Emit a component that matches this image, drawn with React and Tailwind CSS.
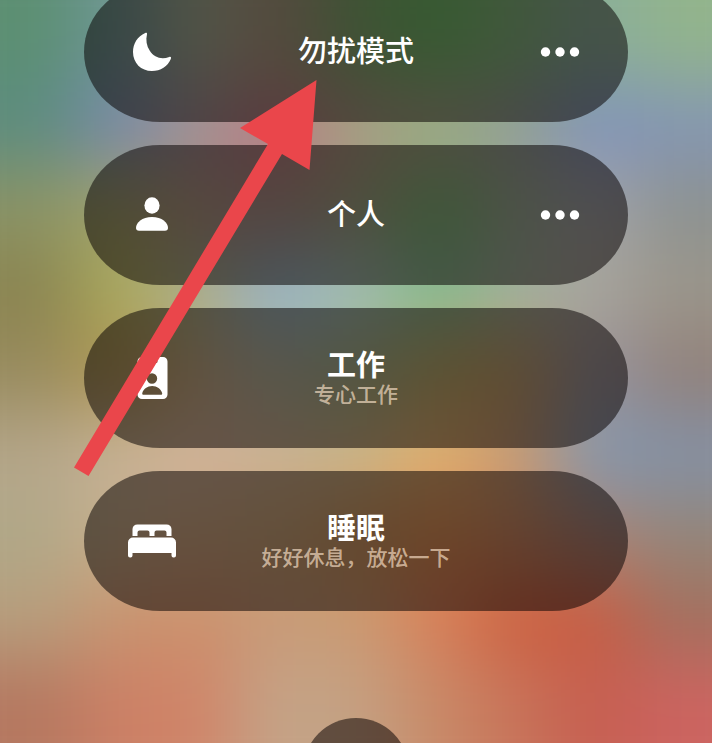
import { clsx } from 'clsx';

// Wallpaper tones, left to right and top to bottom
const WALLPAPER = [
  ['#5c8f72', '#6e9696', '#a5b295', '#ac9a82', '#7cac6e', '#6cbe68', '#82b87c', '#8aae9c', '#92b48c'],
  ['#5c8c80', '#7888ae', '#a08d92', '#bc7884', '#a99a84', '#a3a387', '#949c96', '#8092bc', '#8496b4'],
  ['#8c9466', '#a2a46c', '#b09484', '#aa8e84', '#a0a482', '#78b772', '#9aac92', '#a4a6ac', '#8d9290'],
  ['#8a8450', '#acab5c', '#a8af8a', '#92b4cc', '#a2beb6', '#82ba90', '#9fb0a0', '#a9a59c', '#9b968b'],
  ['#988b5e', '#b09650', '#c8ac86', '#b2b6a0', '#a4b488', '#bcac68', '#c4a066', '#9894a0', '#92817a'],
  ['#b5a68a', '#c6b297', '#d0b29a', '#cbb092', '#cbb489', '#e2b070', '#c89a74', '#8498ae', '#8491a6'],
  ['#b0a888', '#c8b08c', '#ceaa84', '#c8a87a', '#cc9a62', '#e09052', '#ce8c62', '#ac8678', '#948679'],
  ['#b79e7d', '#c89470', '#cc906c', '#c89a78', '#ca9a72', '#d8805a', '#cc6040', '#c85c42', '#a3705e'],
  ['#b57860', '#cc8066', '#d08468', '#c4a488', '#c4a183', '#c88a68', '#c8745a', '#c65e50', '#cc6460'],
];

// The outer ring repeats the edge tones so the blur never runs out of colour
const pad = (list) => [list[0], ...list, list[list.length - 1]];
const TILES = pad(WALLPAPER.map(pad)).flat();

const MoonIcon = () => (
  <svg viewBox="0 0 48 48" className="size-12" fill="currentColor" aria-hidden="true">
    <path d="M19 6.2C19.4 4.9 18.4 4.4 17.2 5C9.6 8.4 5 15.5 5 24C5 35 13 43 24 43C32.4 43 39.9 38.3 42.8 31C43.5 29.2 42.7 28.3 41.2 28.9C33.5 32 26 29.3 21.8 22.8C18.5 17.6 17.6 12 19 6.2Z" />
  </svg>
);

const PersonIcon = () => (
  <svg viewBox="0 0 48 48" className="size-12" fill="currentColor" aria-hidden="true">
    <ellipse cx="24" cy="14.5" rx="7.6" ry="8.2" />
    <path d="M11 39.7C9 39.7 8 38.7 8 37.1C8 31.5 14 25.9 24 25.9S40 31.5 40 37.1C40 38.7 39 39.7 37 39.7Z" />
  </svg>
);

const BadgeIcon = () => (
  <svg viewBox="0 0 48 48" className="size-12" fill="currentColor" aria-hidden="true">
    <path
      fillRule="evenodd"
      d="M14 3H35A4.5 4.5 0 0 1 39.5 7.5V40.5A4.5 4.5 0 0 1 35 45H14A4.5 4.5 0 0 1 9.5 40.5V7.5A4.5 4.5 0 0 1 14 3ZM20.5 6A1.5 1.5 0 0 0 20.5 9H28A1.5 1.5 0 0 0 28 6ZM24 19.3A5.2 5.2 0 0 0 24 29.7A5.2 5.2 0 0 0 24 19.3ZM15.5 40.8H33C34 40.8 34.4 40 34.1 39C33 35 29 32 24.2 32S15.4 35 14.3 39C14 40 14.5 40.8 15.5 40.8Z"
    />
  </svg>
);

const BedIcon = () => (
  <svg viewBox="0 0 48 48" className="size-12" fill="currentColor" aria-hidden="true">
    <path d="M4.5 19V12A5 5 0 0 1 9.500 7.500H38.500A5 5 0 0 1 43.500 12V19H38.500V15.500A2 2 0 0 0 36.500 13.500H28.500A2 2 0 0 0 26.500 15.500V19H21.500V15.500A2 2 0 0 0 19.500 13.500H11.500A2 2 0 0 0 9.500 15.500V19Z" />
    <path d="M5 20.500H43A5 5 0 0 1 48 25.500V38.500A2 2 0 0 1 46 40.500H45.500A2 2 0 0 1 43.500 38.500V36H4.500V38.500A2 2 0 0 1 2.500 40.500H2A2 2 0 0 1 0 38.500V25.500A5 5 0 0 1 5 20.500Z" />
  </svg>
);

const DotsIcon = () => (
  <svg viewBox="0 0 48 48" className="size-12" fill="currentColor" aria-hidden="true">
    <circle cx="9.5" cy="24" r="4.7" />
    <circle cx="24" cy="24" r="4.7" />
    <circle cx="38.5" cy="24" r="4.7" />
  </svg>
);

const MODES = [
  { key: 'dnd', label: '勿扰模式', icon: MoonIcon, more: true },
  { key: 'personal', label: '个人', icon: PersonIcon, more: true },
  { key: 'work', label: '工作', desc: '专心工作', icon: BadgeIcon },
  { key: 'sleep', label: '睡眠', desc: '好好休息，放松一下', icon: BedIcon },
];

const Wallpaper = () => (
  <div className="absolute -inset-20 -z-10 grid grid-cols-11 grid-rows-11 blur-[36px]">
    {TILES.map((tone, i) => (
      <div key={i} style={{ background: tone }} />
    ))}
  </div>
);

const FocusMode = ({ mode }) => {
  const Icon = mode.icon;
  return (
    <li className="flex h-[140px] items-center rounded-[76px/70px] bg-[#050000]/52 px-11">
      <button type="button" className="flex h-full flex-1 items-center">
        <Icon />
        <span className="flex flex-1 flex-col items-center">
          <span className={clsx('text-[29px] leading-[34px]', mode.desc ? 'font-bold' : 'font-medium')}>
            {mode.label}
          </span>
          {mode.desc && (
            <span className="text-[21px] leading-6 font-medium text-[#ffe6cd]/65">{mode.desc}</span>
          )}
        </span>
      </button>
      {mode.more ? (
        <button type="button" aria-label={`${mode.label} 更多`} className="size-12">
          <DotsIcon />
        </button>
      ) : (
        <div className="size-12" />
      )}
    </li>
  );
};

const Arrow = () => (
  <svg
    viewBox="0 0 243 397"
    className="pointer-events-none absolute top-[80px] left-1/2 -ml-[282px] w-[243px]"
    fill="#ea464b"
    aria-hidden="true"
  >
    <path d="M242.5 0L235.5 90L208 74L14.5 396L0 387.5L194 64L166 48Z" />
  </svg>
);

export default function App() {
  return (
    <main
      className="relative isolate h-screen overflow-hidden text-white"
      style={{ fontFamily: '"Liberation Sans", "Noto Sans CJK SC", sans-serif' }}
    >
      <Wallpaper />

      {/* Focus list, scrolled so the first pill is cut by the top edge */}
      <div className="mx-auto -mt-[18px] flex max-w-[544px] flex-col items-center">
        <ul className="flex w-full flex-col gap-[23px]">
          {MODES.map((mode) => (
            <FocusMode key={mode.key} mode={mode} />
          ))}
        </ul>
        <button type="button" aria-label="新专注模式" className="mt-[107px] size-[106px] shrink-0 rounded-full bg-[#050000]/52" />
      </div>

      <Arrow />
    </main>
  );
}
